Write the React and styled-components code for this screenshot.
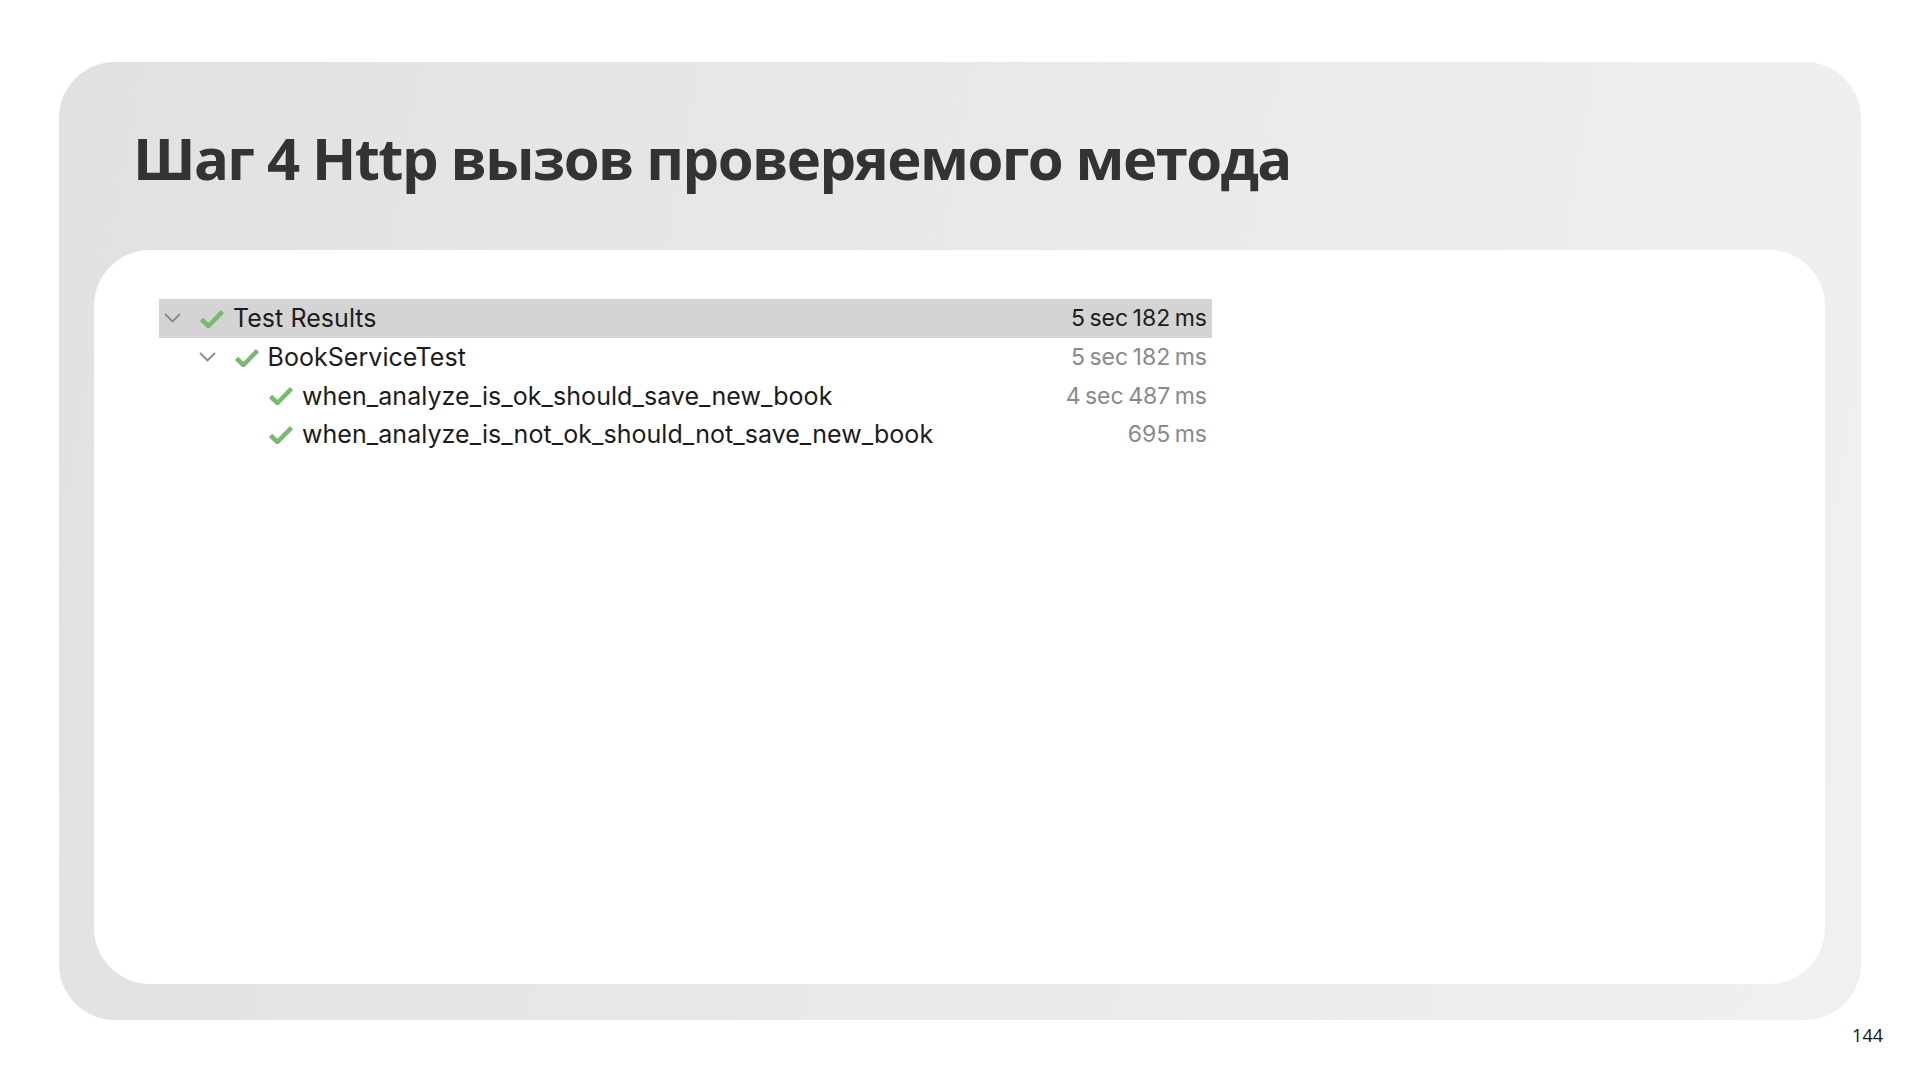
import styled, { createGlobalStyle } from "styled-components";

const GlobalStyle = createGlobalStyle`
  html, body {
    margin: 0;
    padding: 0;
    background: #ffffff;
  }
  body {
    font-family: "Open Sans", "Liberation Sans", sans-serif;
  }
`;

const tests = [
  { name: "Test Results", time: "5 sec 182 ms", depth: 0, expandable: true, selected: true },
  { name: "BookServiceTest", time: "5 sec 182 ms", depth: 1, expandable: true },
  { name: "when_analyze_is_ok_should_save_new_book", time: "4 sec 487 ms", depth: 2 },
  { name: "when_analyze_is_not_ok_should_not_save_new_book", time: "695 ms", depth: 2 },
];

const Page = styled.div`
  width: 1920px;
  height: 1082px;
  box-sizing: border-box;
  padding: 62px 59px 0 59px;
  display: flex;
  flex-direction: column;
`;

const Slide = styled.section`
  height: 958px;
  border-radius: 56px;
  background: linear-gradient(100deg, #e0e1e3 0%, #e8e9eb 50%, #f0f0f2 100%);
  display: flex;
  flex-direction: column;
  padding: 0 36px 36px 35px;
  box-sizing: border-box;
`;

const Title = styled.h1`
  margin: 0;
  height: 188px;
  padding: 55px 0 0 39px;
  box-sizing: border-box;
  font-family: "Open Sans", "Liberation Sans", sans-serif;
  font-weight: 700;
  font-size: 58px;
  line-height: 82px;
  letter-spacing: -1.6px;
  color: #333333;
`;

const Card = styled.div`
  flex: 1;
  background: #ffffff;
  border-radius: 56px;
  padding: 49px 0 0 65px;
  box-sizing: border-box;
`;

const Tree = styled.div`
  width: 1053px;
  display: flex;
  flex-direction: column;
`;

const Row = styled.div`
  height: 38.7px;
  display: flex;
  align-items: center;
  box-sizing: border-box;
  padding-left: ${(p) => 4 + p.$depth * 34.5}px;
  padding-right: 5px;
  background: ${(p) => (p.$selected ? "#d4d4d4" : "transparent")};
  font-family: "Inter", "Roboto", sans-serif;
  font-size: 25px;
  color: #1c1c1c;
`;

const Toggle = styled.span`
  width: 30px;
  height: 20px;
  display: flex;
  align-items: center;
  justify-content: flex-start;
  flex-shrink: 0;
  margin-right: 7px;
`;

const Check = styled.span`
  width: 24px;
  height: 20px;
  display: flex;
  align-items: center;
  flex-shrink: 0;
  margin-right: 9px;
`;

const Name = styled.span`
  flex: 1;
  white-space: nowrap;
  letter-spacing: 0.05px;
`;

const Time = styled.span`
  white-space: nowrap;
  font-size: 23px;
  word-spacing: -2px;
  color: ${(p) => (p.$selected ? "#1c1c1c" : "#8a8a8a")};
`;

const Footer = styled.div`
  display: flex;
  justify-content: flex-end;
  margin-right: -22px;
  padding-top: 3px;
  font-family: "Open Sans", "Liberation Sans", sans-serif;
  font-size: 18px;
  color: #111111;
`;

const Chevron = () => (
  <svg width="19" height="12" viewBox="0 0 19 12">
    <path d="M2 2 L9.5 9.5 L17 2" fill="none" stroke="#8a8a8a" strokeWidth="1.8" />
  </svg>
);

const CheckMark = () => (
  <svg width="24" height="19" viewBox="0 0 24 19">
    <path
      d="M1.5 10.5 L8.5 17 L22.5 2.5"
      fill="none"
      stroke="#78bb6f"
      strokeWidth="4.6"
      strokeLinejoin="round"
    />
  </svg>
);

export default function App() {
  return (
    <>
      <GlobalStyle />
      <Page>
        <Slide>
          <Title>Шаг 4 Http вызов проверяемого метода</Title>
          <Card>
            <Tree>
              {tests.map((t) => (
                <Row key={t.name} $depth={t.depth} $selected={t.selected}>
                  <Toggle>{t.expandable && <Chevron />}</Toggle>
                  <Check>
                    <CheckMark />
                  </Check>
                  <Name>{t.name}</Name>
                  <Time $selected={t.selected}>{t.time}</Time>
                </Row>
              ))}
            </Tree>
          </Card>
        </Slide>
        <Footer>144</Footer>
      </Page>
    </>
  );
}
